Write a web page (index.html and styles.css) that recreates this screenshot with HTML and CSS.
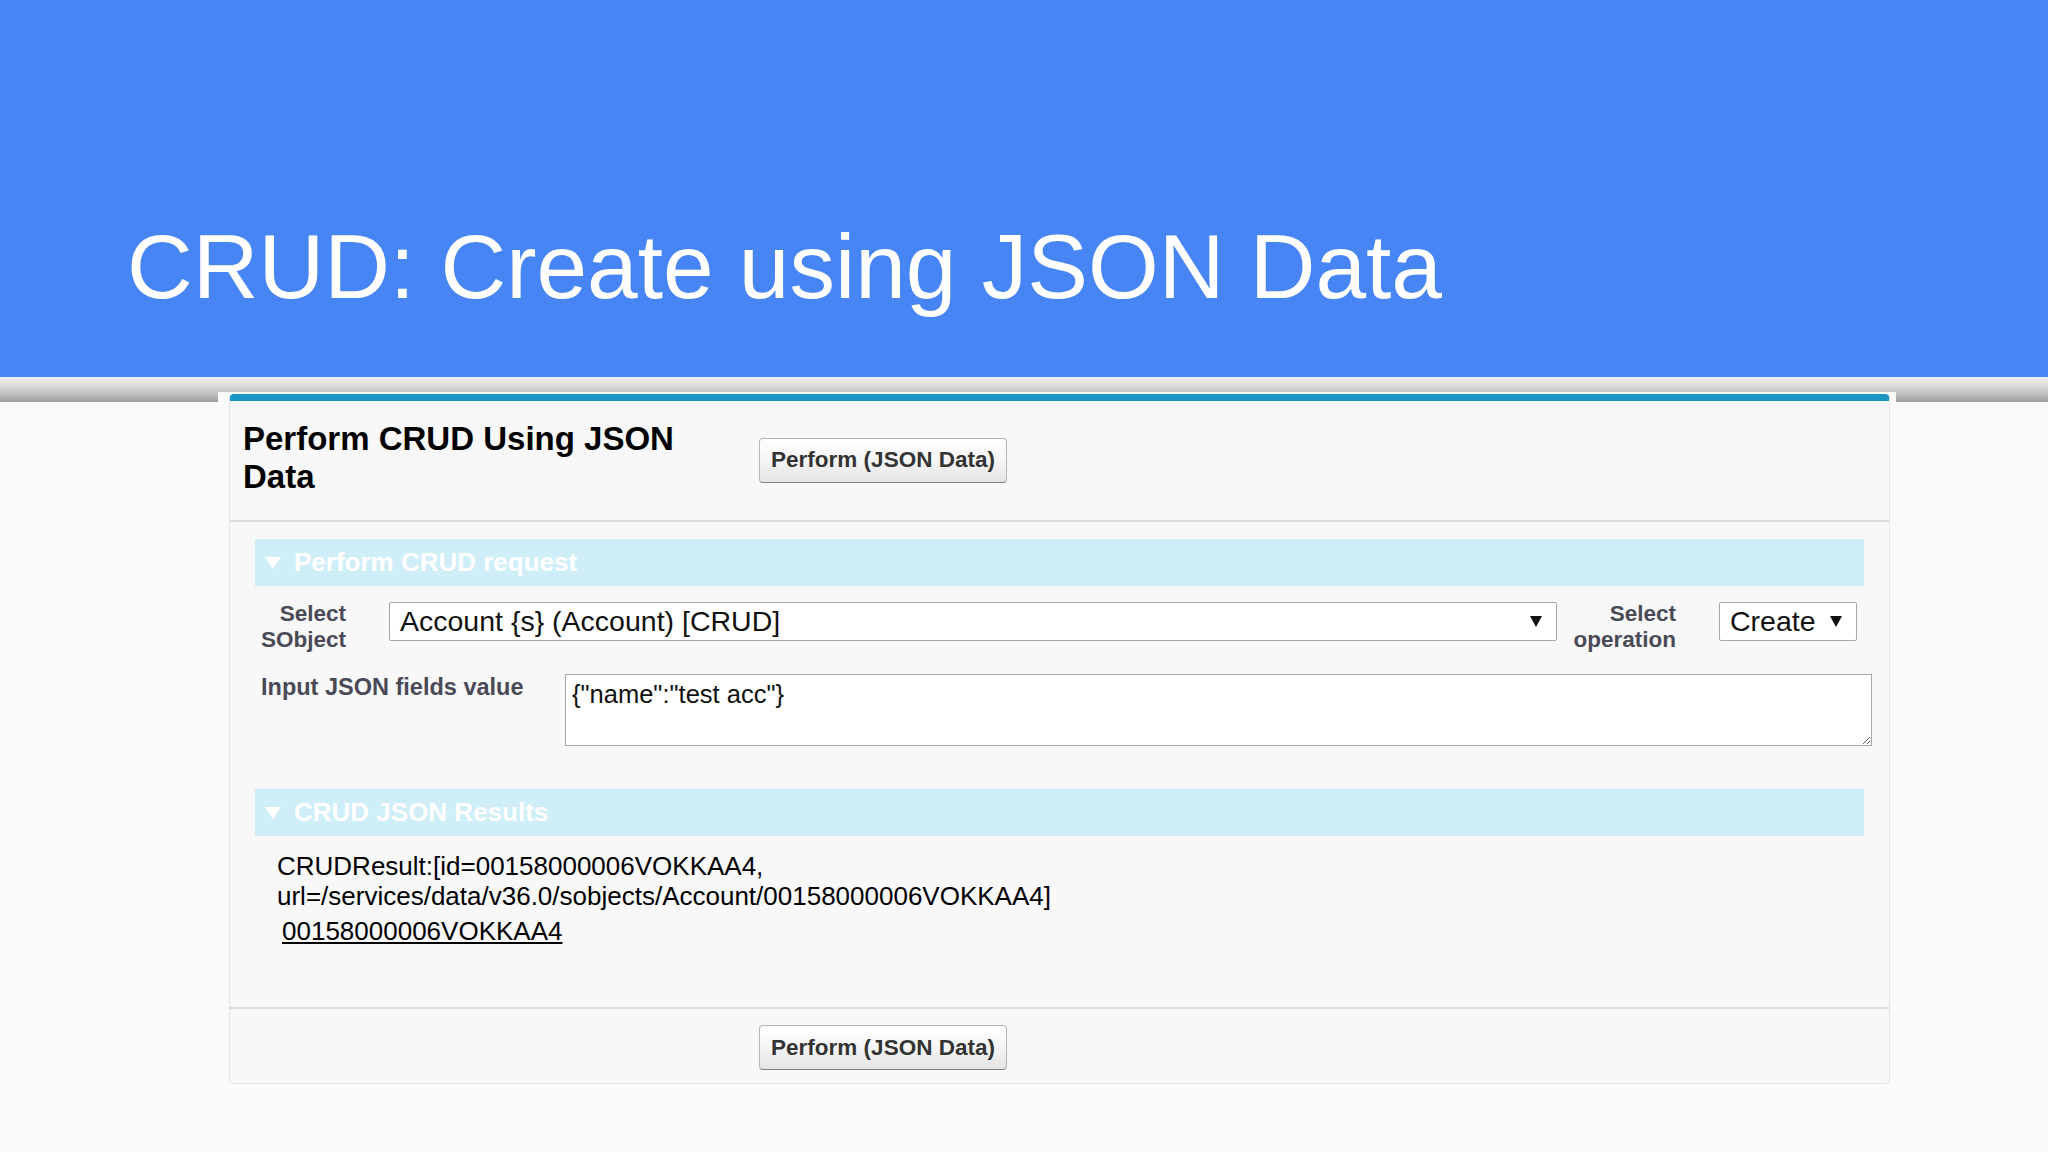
FILE: index.html
```html
<!DOCTYPE html>
<html lang="en">
<head>
<meta charset="utf-8">
<title>CRUD: Create using JSON Data</title>
<link rel="stylesheet" href="styles.css">
</head>
<body>
<header class="slide-head">
  <h1>CRUD: Create using JSON Data</h1>
</header>
<div class="rule"></div>
<main class="shot">
  <section class="block">
    <div class="block-head">
      <h2>Perform CRUD Using JSON Data</h2>
      <button class="btn" type="button">Perform (JSON Data)</button>
    </div>
    <div class="block-body">
      <div class="subhead">
        <svg class="tri" width="16" height="12" viewBox="0 0 16 12"><polygon points="0,0 16,0 8,12"/></svg>
        <span>Perform CRUD request</span>
      </div>
      <div class="row row-select">
        <label class="lbl lbl-sobject">Select<br>SObject</label>
        <div class="sel sel-wide"><span>Account {s} (Account) [CRUD]</span><svg class="arrow" width="12" height="11" viewBox="0 0 12 11"><polygon points="0,0 12,0 6,11"/></svg></div>
        <label class="lbl lbl-op">Select<br>operation</label>
        <div class="sel sel-op"><span>Create</span><svg class="arrow" width="12" height="11" viewBox="0 0 12 11"><polygon points="0,0 12,0 6,11"/></svg></div>
      </div>
      <div class="row row-json">
        <label class="lbl lbl-json">Input JSON fields value</label>
        <textarea class="json" readonly>{"name":"test acc"}</textarea>
      </div>
      <div class="subhead subhead-results">
        <svg class="tri" width="16" height="12" viewBox="0 0 16 12"><polygon points="0,0 16,0 8,12"/></svg>
        <span>CRUD JSON Results</span>
      </div>
      <div class="results">
        <div class="result-text">CRUDResult:[id=00158000006VOKKAA4,<br>url=/services/data/v36.0/sobjects/Account/00158000006VOKKAA4]</div>
        <div class="result-link"><a href="#">00158000006VOKKAA4</a></div>
      </div>
    </div>
    <div class="block-foot">
      <button class="btn" type="button">Perform (JSON Data)</button>
    </div>
  </section>
</main>
</body>
</html>
```

FILE: styles.css
```css
* { box-sizing: border-box; }

html, body {
  margin: 0;
  padding: 0;
}

body {
  background: #fafafa;
  font-family: "Liberation Sans", Arial, sans-serif;
  width: 2048px;
  height: 1152px;
  overflow: hidden;
}

.slide-head {
  height: 377px;
  background: #4785f4;
  padding: 217px 0 0 127px;
}

.slide-head h1 {
  margin: 0;
  font-weight: 400;
  font-size: 91px;
  line-height: 100px;
  color: #ffffff;
  letter-spacing: 0;
}

.rule {
  height: 25px;
  background: linear-gradient(#eeeeee 0%, #dcdcdc 35%, #b8b8b8 75%, #9d9d9d 100%);
}

.shot {
  margin: -10px 0 0 218px;
  width: 1678px;
  background: #fafafa;
  padding: 2px 0 0 11px;
}

.block {
  width: 1661px;
  background: #f8f8f9;
  border: 1px solid #e4e4e6;
  border-top: 7px solid #1a96c2;
  border-radius: 5px;
}

.block-head {
  display: grid;
  grid-template-columns: 516px auto;
  align-items: center;
  padding: 19px 0 24px 13px;
  border-bottom: 2px solid #dcdbdd;
}

.block-head h2 {
  margin: 0;
  max-width: 460px;
  font-size: 33px;
  line-height: 38px;
  font-weight: 700;
  color: #000;
}

.btn {
  justify-self: start;
  width: 248px;
  height: 45px;
  padding: 0 8px;
  font-family: "Liberation Sans", Arial, sans-serif;
  font-size: 22.5px;
  font-weight: 700;
  color: #333;
  background: linear-gradient(#ffffff 0%, #f6f6f6 45%, #e4e4e4 100%);
  border: 1px solid #b5b5b5;
  border-bottom-color: #7f7f7f;
  border-radius: 4px;
  white-space: nowrap;
}

.block-head .btn {
  margin-top: 4px;
}

.block-body {
  padding: 17px 25px 61px 25px;
  border-bottom: 2px solid #dcdbdd;
}

.subhead {
  display: flex;
  align-items: center;
  gap: 13px;
  height: 47px;
  padding-left: 10px;
  background: #cfeef8;
  color: #ffffff;
  font-size: 26px;
  font-weight: 700;
}

.subhead .tri {
  fill: #ffffff;
  flex: none;
}

.row {
  display: flex;
  align-items: flex-start;
}

.row-select {
  margin-top: 15px;
}

.lbl {
  color: #4a4a56;
  font-weight: 700;
  font-size: 22.5px;
  line-height: 26px;
}

.lbl-sobject {
  margin-left: 6px;
  width: 85px;
  text-align: right;
}

.lbl-op {
  margin-left: 10px;
  width: 109px;
  text-align: right;
}

.sel {
  display: flex;
  align-items: center;
  justify-content: space-between;
  margin-top: 1px;
  margin-left: 43px;
  height: 39px;
  padding: 0 14px 0 10px;
  background: #ffffff;
  border: 1px solid #a7a7a7;
  border-radius: 2px;
  font-size: 28.5px;
  color: #111;
}

.sel .arrow {
  fill: #111;
  flex: none;
}

.sel-wide {
  width: 1168px;
}

.sel-op {
  width: 138px;
}

.row-json {
  margin-top: 21px;
}

.lbl-json {
  margin-left: 6px;
  width: 304px;
  font-size: 23.5px;
}

.json {
  display: block;
  width: 1307px;
  height: 72px;
  margin-right: -8px;
  padding: 4px 6px;
  border: 1px solid #a7a7a7;
  background: #ffffff;
  font-family: "Liberation Sans", Arial, sans-serif;
  font-size: 25.5px;
  line-height: 30px;
  color: #111;
  resize: both;
  outline: none;
}

.subhead-results {
  margin-top: 43px;
}

.results {
  padding: 15px 0 0 22px;
  font-size: 26px;
  line-height: 30px;
  color: #000;
}

.result-link {
  margin-top: 5px;
  padding-left: 5px;
}

.result-link a {
  color: #000;
  text-decoration: underline;
}

.block-foot {
  padding: 16px 0 13px 529px;
}
```
